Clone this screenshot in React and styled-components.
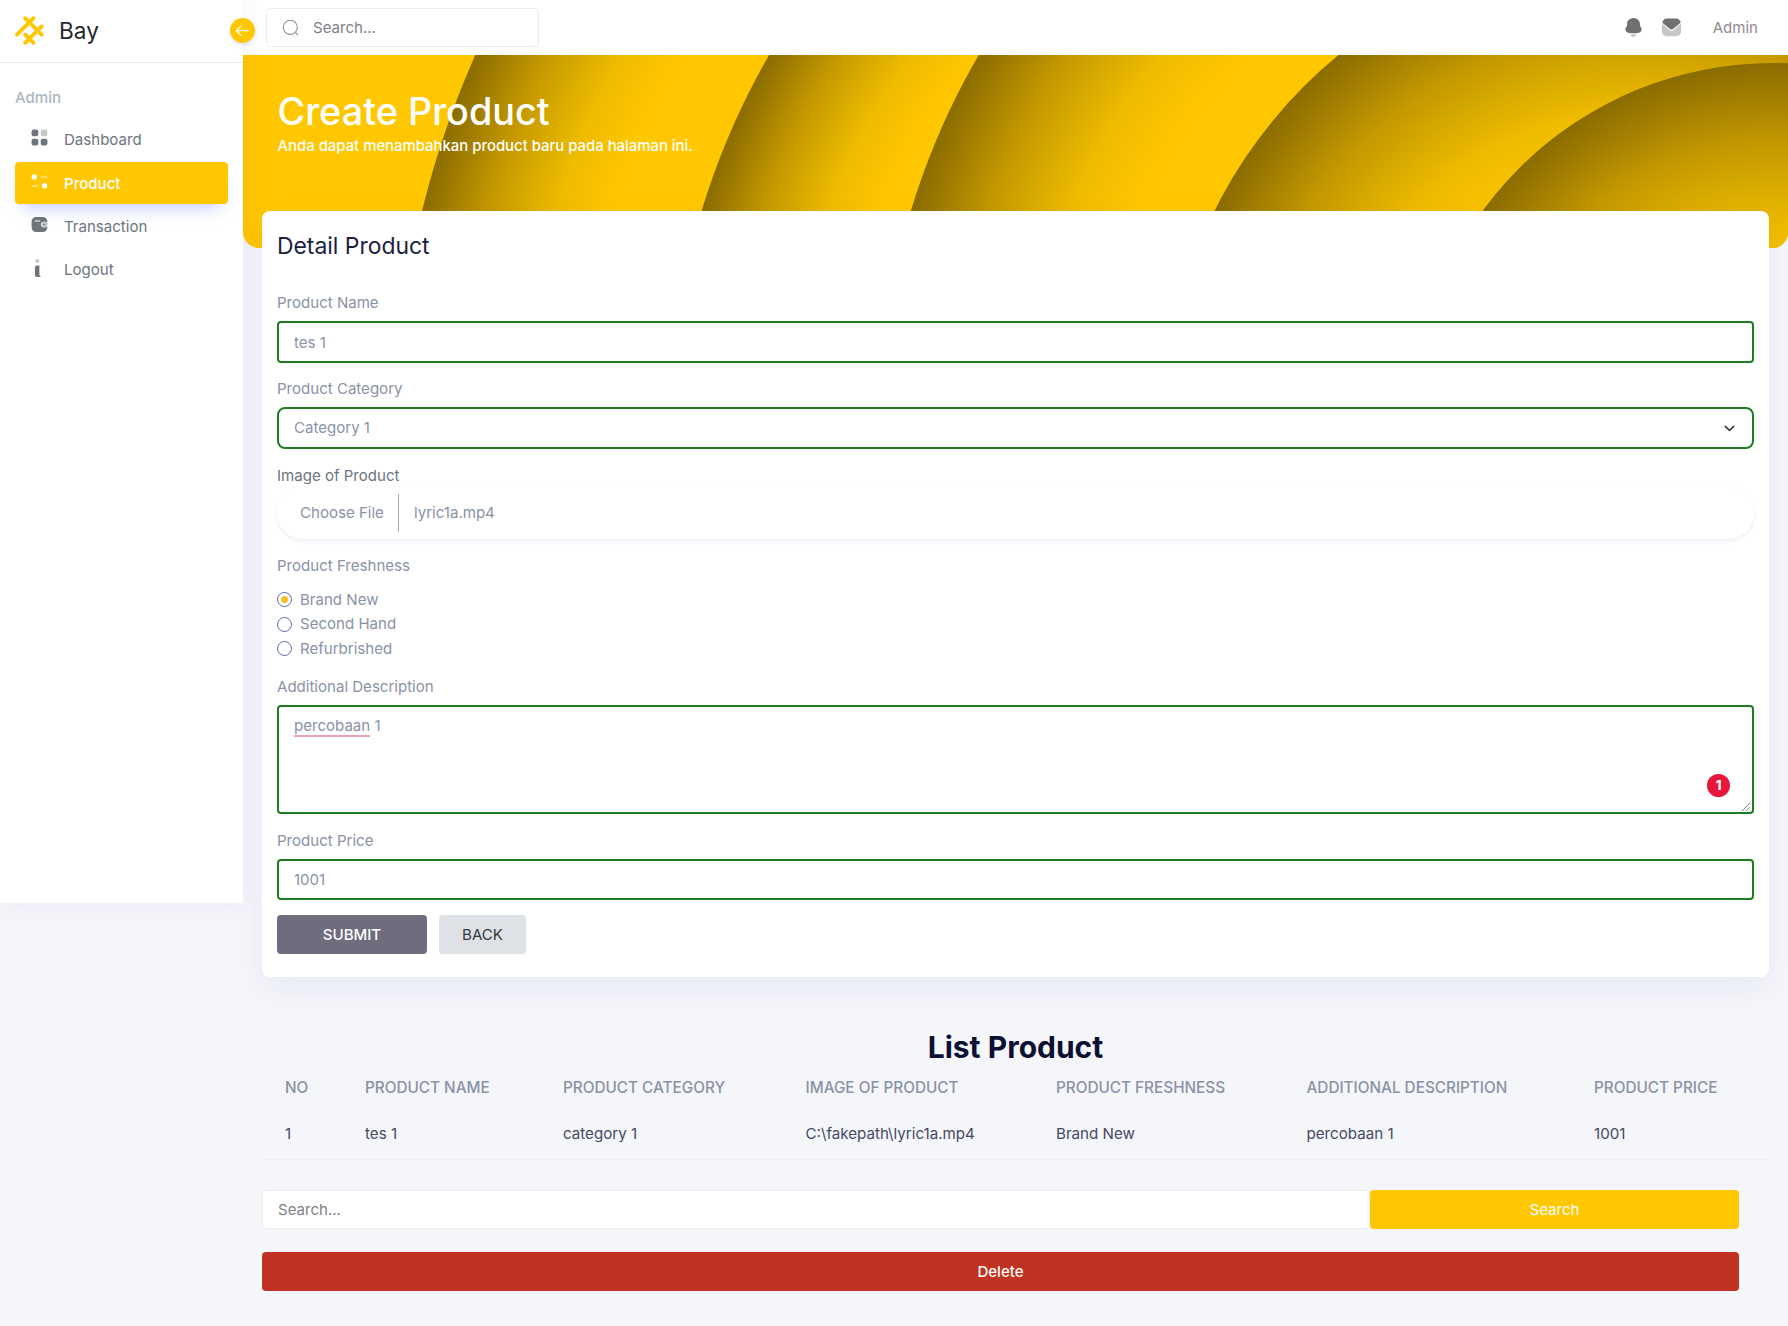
import React from "react";
import styled, { createGlobalStyle, css } from "styled-components";

const YELLOW = "#ffc700";
const MUTED = "#8a92a6";

const GlobalStyle = createGlobalStyle`
  *, *::before, *::after { box-sizing: border-box; }
  body {
    margin: 0;
    background: #f5f6fa;
    font-family: Inter, "Liberation Sans", sans-serif;
    font-size: 15.05px;
    line-height: 22px;
    color: ${MUTED};
  }
  button, input { font: inherit; }
`;

const Page = styled.div`
  display: flex;
  align-items: flex-start;
  width: 1788px;
  height: 1326px;
  overflow: hidden;
`;

/* ---------- Sidebar ---------- */

const Sidebar = styled.aside`
  position: relative;
  z-index: 3;
  flex: 0 0 243px;
  height: 903px;
  background: #fff;
  box-shadow: 0 0 28px rgba(17, 38, 146, 0.06);
`;

const Brand = styled.div`
  display: flex;
  align-items: center;
  gap: 15px;
  height: 63px;
  padding: 0 0 1px 15px;
  border-bottom: 1px solid #e6e7ea;
  color: ${YELLOW};
`;

const BrandName = styled.span`
  font-size: 22.6px;
  line-height: 30px;
  color: #25282e;
`;

const Collapse = styled.button`
  position: absolute;
  top: 18px;
  right: -12px;
  display: grid;
  place-items: center;
  width: 25px;
  height: 25px;
  padding: 0;
  border: 0;
  border-radius: 50%;
  background: ${YELLOW};
  color: #fff;
  box-shadow: 0 2px 4px rgba(17, 38, 146, 0.12);
`;

const Menu = styled.nav`
  display: flex;
  flex-direction: column;
  gap: 1.7px;
  padding: 23px 15px 0;
`;

const MenuTitle = styled.div`
  height: 31.3px;
  padding-top: 1px;
  font-weight: 500;
  color: #adb5bd;
`;

const MenuItem = styled.a`
  display: flex;
  align-items: center;
  height: 41.6px;
  padding: 1px 15px 0;
  border-radius: 4px;
  color: #6c757d;
  ${(p) =>
    p.$active &&
    css`
      background: ${YELLOW};
      color: #fff;
      font-weight: 500;
      box-shadow: 0 10px 18px -8px rgba(58, 87, 232, 0.35);
    `}
`;

const MenuIcon = styled.span`
  display: flex;
  width: 34px;
  padding-bottom: 5px;
`;

/* ---------- Main column ---------- */

const Main = styled.main`
  flex: 1;
  min-width: 0;
`;

const TopBar = styled.header`
  display: flex;
  align-items: center;
  justify-content: space-between;
  height: 54.5px;
  padding: 0 30px 0 23px;
  background: #fff;
`;

const SearchBox = styled.label`
  display: flex;
  align-items: center;
  gap: 14px;
  width: 273px;
  height: 39px;
  padding: 1px 15px 0;
  border: 1px solid #ececee;
  border-radius: 4px;
`;

const SearchInput = styled.input`
  flex: 1;
  min-width: 0;
  padding: 0;
  border: 0;
  outline: 0;
  background: transparent;
  &::placeholder { color: #7d8187; opacity: 1; }
`;

const Actions = styled.div`
  display: flex;
  align-items: center;
  gap: 15px;
  color: #707070;
`;

const UserName = styled.span`
  margin-left: 15px;
  padding-top: 1px;
  color: #8c8c8c;
`;

const Banner = styled.section`
  position: relative;
  height: 193.5px;
  padding: 32.5px 34.5px;
  overflow: hidden;
  border-radius: 0 0 16px 16px;
  background: ${YELLOW};
  color: #fff;
`;

const BannerArt = styled.svg`
  position: absolute;
  inset: 0;
  width: 1545px;
  height: 194px;
`;

const BannerText = styled.div`
  position: relative;
`;

const BannerTitle = styled.h1`
  margin: 0;
  font-size: 37.8px;
  line-height: 48px;
  font-weight: 500;
`;

const BannerNote = styled.p`
  margin: 0;
  font-size: 14.9px;
  font-weight: 500;
`;

const Card = styled.section`
  position: relative;
  margin: -37px 19px 0;
  height: 766px;
  padding: 20px 15px 0;
  border-radius: 8px;
  background: #fff;
  box-shadow: 0 10px 30px rgba(17, 38, 146, 0.06);
`;

const CardTitle = styled.h4`
  margin: 0 0 31px;
  font-size: 22.9px;
  line-height: 30px;
  font-weight: 400;
  color: #1b1e3f;
`;

const Label = styled.label`
  display: block;
  height: 29px;
  color: ${(p) => (p.$dark ? "#6c757d" : MUTED)};
`;

const fieldBox = css`
  width: 100%;
  border: 2px solid #1d7d1f;
  border-radius: 4px;
  background: #fff;
  color: ${MUTED};
  padding: 1px 15px 0;
`;

const Field = styled.input`
  ${fieldBox}
  display: block;
  height: 41.5px;
  margin-bottom: 15.5px;
  outline: 0;
`;

const Select = styled.div`
  ${fieldBox}
  display: flex;
  align-items: center;
  justify-content: space-between;
  height: 41.5px;
  margin-bottom: 16px;
  border-radius: 8px;
`;

const FilePicker = styled.div`
  display: flex;
  align-items: center;
  height: 52px;
  margin: -6.5px 0 15.5px;
  padding-left: 23px;
  border-radius: 26px;
  box-shadow: 0 2px 4px rgba(17, 38, 146, 0.08);
`;

const FileButton = styled.span`
  display: flex;
  align-items: center;
  height: 38px;
  width: 99px;
  margin-right: 15px;
  border-right: 1px solid #a4aab9;
`;

const RadioGroup = styled.div`
  display: flex;
  flex-direction: column;
  gap: 2.5px;
  margin: 5px 0 16px;
`;

const RadioRow = styled.label`
  display: flex;
  align-items: center;
  gap: 8px;
  height: 22px;
`;

const RadioMark = styled.span`
  width: 15px;
  height: 15px;
  border: 1px solid #5a69a8;
  border-radius: 50%;
  background: ${(p) => (p.$checked ? "radial-gradient(circle, #f8bd1c 3px, #fff 4px)" : "#fff")};
`;

const TextArea = styled.div`
  ${fieldBox}
  position: relative;
  height: 109px;
  padding-top: 8px;
  margin-bottom: 16px;
`;

const Misspelt = styled.span`
  border-bottom: 2.5px solid #f0a0b2;
`;

const ErrorCount = styled.span`
  position: absolute;
  right: 22px;
  bottom: 15px;
  width: 23px;
  height: 23px;
  border-radius: 50%;
  background: #e5173b;
  color: #fff;
  font-size: 13px;
  font-weight: 800;
  line-height: 23px;
  text-align: center;
`;

const ResizeGrip = styled.svg`
  position: absolute;
  right: 1px;
  bottom: 0;
`;

const ButtonRow = styled.div`
  display: flex;
  gap: 12px;
  margin-top: -1px;
`;

const Button = styled.button`
  width: ${(p) => p.$width};
  height: 39.5px;
  padding: 1px 0 0;
  border: 0;
  border-radius: 4px;
  background: ${(p) => p.$bg};
  color: ${(p) => p.$color || "#fff"};
  font-weight: ${(p) => p.$weight || 400};
`;

/* ---------- Product list ---------- */

const ListTitle = styled.h2`
  margin: 50px 0 0;
  font-size: 30px;
  line-height: 40px;
  font-weight: 700;
  text-align: center;
  color: #0c1033;
`;

const Table = styled.div`
  margin: 0 19px;
  border-bottom: 1px solid #eeeff3;
`;

const Row = styled.div`
  display: grid;
  grid-template-columns: 80px 198px 242.5px 250.5px 250.5px 287.5px 197px;
  align-items: center;
  height: ${(p) => (p.$head ? "40px" : "52px")};
  padding-top: ${(p) => (p.$head ? "1px" : "2px")};
  color: ${(p) => (p.$head ? MUTED : "#454a63")};
  font-size: ${(p) => (p.$head ? "15.3px" : "15.15px")};
  font-weight: ${(p) => (p.$head ? 500 : 400)};
`;

const Cell = styled.span`
  padding-left: 23px;
  white-space: nowrap;
`;

const ListTools = styled.div`
  display: flex;
  flex-direction: column;
  gap: 22.5px;
  width: 1477px;
  margin: 29.5px 0 0 19px;
`;

const ToolRow = styled.div`
  display: flex;
  align-items: center;
`;

const ListSearch = styled.input`
  flex: 1;
  height: 39.5px;
  padding: 0 15px;
  border: 1px solid #eeeff2;
  border-radius: 4px;
  background: #fff;
  outline: 0;
  &::placeholder { color: #7d8187; opacity: 1; }
`;

/* ---------- Icons ---------- */

const Logo = () => (
  <svg width="29" height="29" viewBox="0 0 30 30" fill="currentColor">
    <rect x="-0.757" y="19.243" width="28" height="4" rx="2" transform="rotate(-45 -0.757 19.243)" />
    <rect x="7.728" y="27.728" width="28" height="4" rx="2" transform="rotate(-45 7.728 27.728)" />
    <rect x="10.537" y="16.395" width="16" height="4" rx="2" transform="rotate(45 10.537 16.395)" />
    <rect x="10.556" y="-0.556" width="28" height="4" rx="2" transform="rotate(45 10.556 -0.556)" />
  </svg>
);

const ArrowLeft = () => (
  <svg width="19" height="19" viewBox="0 0 24 24" fill="none" stroke="currentColor" strokeWidth="1.5" strokeLinecap="round" strokeLinejoin="round">
    <path d="M4.25 12.27H19.25" />
    <path d="M10.3 18.3L4.25 12.27L10.3 6.25" />
  </svg>
);

const GridIcon = () => (
  <svg width="19" height="19" viewBox="0 0 24 24" fill="currentColor">
    <rect x="13.54" y="2" width="8.46" height="8.53" rx="2.56" opacity="0.4" />
    <rect x="2" y="2" width="8.46" height="8.53" rx="2.56" />
    <rect x="2" y="13.47" width="8.46" height="8.53" rx="2.56" />
    <rect x="13.54" y="13.47" width="8.46" height="8.53" rx="2.56" />
  </svg>
);

const FilterIcon = () => (
  <svg width="19" height="19" viewBox="0 0 24 24" fill="currentColor">
    <rect x="2" y="16.2" width="8.8" height="2.8" rx="1.4" opacity="0.4" />
    <rect x="13" y="4.9" width="9" height="2.8" rx="1.4" opacity="0.4" />
    <circle cx="5.45" cy="6.4" r="3.45" />
    <circle cx="18.5" cy="17.5" r="3.45" />
  </svg>
);

const WalletIcon = () => (
  <svg width="19" height="19" viewBox="0 0 24 24" fill="none">
    <path d="M22 15.94C22 18.73 19.76 21.5 16.97 21.5H7.02C4.26 21.5 2 18.73 2 15.94V8.06C2 5.28 4.26 2.5 7.02 2.5H16.97C19.76 2.5 22 5.28 22 8.06V8.4H17.2C15.1 8.4 13.7 10 13.7 11.95C13.7 14 15.2 15.6 17.4 15.6H22Z" fill="currentColor" />
    <path d="M22 8.9V15.1H17.6C15.7 15.1 14.3 13.7 14.3 12C14.3 10.2 15.7 8.9 17.5 8.9Z" fill="currentColor" opacity="0.4" />
    <path d="M17.5 11.1H18.2C18.7 11.1 19.1 11.5 19.1 12C19.1 12.5 18.7 12.9 18.2 12.9H17.5C17 12.9 16.6 12.5 16.6 12C16.6 11.5 17 11.1 17.5 11.1Z" fill="currentColor" />
    <path d="M6.6 7.6H12.4" stroke="#fff" strokeWidth="1.5" strokeLinecap="round" />
  </svg>
);

const InfoIcon = () => (
  <svg width="17" height="20" viewBox="0 0 17 20" fill="currentColor">
    <circle cx="7.3" cy="3" r="2" opacity="0.4" />
    <path d="M5 9.2C5 8.1 5.8 7.4 6.9 7.4H9.4V16.6C9.4 17.4 9.8 17.9 10.6 18.2V19H7C5.7 19 5 18.2 5 17Z" />
  </svg>
);

const SearchIcon = () => (
  <svg width="17" height="17" viewBox="0 0 24 24" fill="none" stroke="#8a8d94" strokeWidth="1.5" strokeLinecap="round">
    <circle cx="11.77" cy="11.77" r="9.9" />
    <path d="M18.9 18.9L22.4 22.4" />
  </svg>
);

const BellIcon = () => (
  <svg width="23" height="23" viewBox="0 0 24 24" fill="currentColor">
    <path d="M19.77 11.65C19.04 10.79 18.71 10.05 18.71 8.79V8.36C18.71 6.73 18.33 5.67 17.51 4.62C16.25 2.99 14.12 2 12.04 2H11.96C9.92 2 7.86 2.94 6.58 4.5C5.71 5.58 5.29 6.69 5.29 8.36V8.79C5.29 10.05 4.98 10.79 4.23 11.65C3.68 12.27 3.5 13.08 3.5 13.95C3.5 14.81 3.79 15.63 4.36 16.3C5.11 17.1 6.17 17.62 7.25 17.7C8.82 17.89 10.39 17.95 12 17.95C13.61 17.95 15.18 17.84 16.75 17.7C17.83 17.62 18.89 17.1 19.64 16.3C20.21 15.63 20.5 14.81 20.5 13.95C20.5 13.08 20.32 12.27 19.77 11.65Z" />
    <path opacity="0.4" d="M14 19.23C13.5 19.12 10.46 19.12 9.96 19.23C9.53 19.33 9.07 19.56 9.07 20.06C9.09 20.54 9.37 20.97 9.76 21.23C10.26 21.63 10.86 21.88 11.48 21.97C12.38 22.1 13.5 21.86 14.2 21.23C14.59 20.97 14.87 20.54 14.89 20.06C14.89 19.56 14.43 19.33 14 19.23Z" />
  </svg>
);

const MailIcon = () => (
  <svg width="23" height="23" viewBox="0 0 24 24" fill="currentColor">
    <path opacity="0.4" d="M22 15.94C22 18.73 19.76 20.99 16.97 21H7.05C4.27 21 2 18.75 2 15.96V9.2C2 8.3 2.5 8.1 3.1 8.7L10 14.8C11.2 15.8 12.8 15.8 14 14.8L20.9 8.7C21.5 8.1 22 8.3 22 9.2Z" />
    <path d="M21.48 6.1C20.52 4 18.9 2.7 16.97 2.7H7.05C5.12 2.7 3.5 4 2.54 6.1C2.32 6.5 2.43 6.97 2.78 7.26L10.4 13.6C11.4 14.4 12.6 14.4 13.6 13.6L21.24 7.26C21.6 6.97 21.7 6.5 21.48 6.1Z" />
  </svg>
);

/* Overlapping discs, each shaded dark along its rim. */
const DISCS = [
  { cx: 1053, cy: 367, r: 899, depth: 185 },
  { cx: 1159.5, cy: 367, r: 732, depth: 170 },
  { cx: 1364.5, cy: 367, r: 728, depth: 215 },
  { cx: 1397, cy: 367, r: 475, depth: 235 },
  { cx: 1530, cy: 367, r: 359, depth: 235 },
];

const BannerPattern = () => (
  <BannerArt viewBox="0 0 1545 194">
    <defs>
      {DISCS.map((d, i) => (
        <radialGradient key={i} id={`disc${i}`} gradientUnits="userSpaceOnUse" cx={d.cx} cy={d.cy} r={d.r}>
          <stop offset={1 - d.depth / d.r} stopColor={YELLOW} />
          <stop offset={1 - (d.depth * 0.7) / d.r} stopColor="#eebb00" />
          <stop offset={1 - (d.depth * 0.35) / d.r} stopColor="#c49900" />
          <stop offset="1" stopColor="#8a6c00" />
        </radialGradient>
      ))}
    </defs>
    {DISCS.map((d, i) => (
      <circle key={i} cx={d.cx} cy={d.cy} r={d.r} fill={`url(#disc${i})`} />
    ))}
  </BannerArt>
);

/* ---------- Data ---------- */

const MENU = [
  { label: "Dashboard", icon: <GridIcon /> },
  { label: "Product", icon: <FilterIcon />, active: true },
  { label: "Transaction", icon: <WalletIcon /> },
  { label: "Logout", icon: <InfoIcon /> },
];

const FRESHNESS = ["Brand New", "Second Hand", "Refurbrished"];

const COLUMNS = [
  "NO",
  "PRODUCT NAME",
  "PRODUCT CATEGORY",
  "IMAGE OF PRODUCT",
  "PRODUCT FRESHNESS",
  "ADDITIONAL DESCRIPTION",
  "PRODUCT PRICE",
];

const PRODUCT = ["1", "tes 1", "category 1", "C:\\fakepath\\lyric1a.mp4", "Brand New", "percobaan 1", "1001"];

export default function App() {
  return (
    <>
      <GlobalStyle />
      <Page>
        <Sidebar>
          <Brand>
            <Logo />
            <BrandName>Bay</BrandName>
          </Brand>
          <Collapse aria-label="Collapse">
            <ArrowLeft />
          </Collapse>
          <Menu>
            <MenuTitle>Admin</MenuTitle>
            {MENU.map((m) => (
              <MenuItem key={m.label} $active={m.active}>
                <MenuIcon>{m.icon}</MenuIcon>
                {m.label}
              </MenuItem>
            ))}
          </Menu>
        </Sidebar>

        <Main>
          <TopBar>
            <SearchBox>
              <SearchIcon />
              <SearchInput placeholder="Search..." />
            </SearchBox>
            <Actions>
              <BellIcon />
              <MailIcon />
              <UserName>Admin</UserName>
            </Actions>
          </TopBar>

          <Banner>
            <BannerPattern />
            <BannerText>
              <BannerTitle>Create Product</BannerTitle>
              <BannerNote>Anda dapat menambahkan product baru pada halaman ini.</BannerNote>
            </BannerText>
          </Banner>

          <Card>
            <CardTitle>Detail Product</CardTitle>
            <Label>Product Name</Label>
            <Field defaultValue="tes 1" />
            <Label>Product Category</Label>
            <Select>
              Category 1
              <svg width="15" height="15" viewBox="0 0 16 16" fill="none" stroke="#343a40" strokeWidth="1.7" strokeLinecap="round" strokeLinejoin="round">
                <path d="M3.5 5.8L8 10L12.5 5.8" />
              </svg>
            </Select>
            <Label $dark>Image of Product</Label>
            <FilePicker>
              <FileButton>Choose File</FileButton>
              lyric1a.mp4
            </FilePicker>
            <Label>Product Freshness</Label>
            <RadioGroup>
              {FRESHNESS.map((f, i) => (
                <RadioRow key={f}>
                  <RadioMark $checked={i === 0} />
                  {f}
                </RadioRow>
              ))}
            </RadioGroup>
            <Label>Additional Description</Label>
            <TextArea>
              <Misspelt>percobaan</Misspelt> 1
              <ErrorCount>1</ErrorCount>
              <ResizeGrip width="10" height="10" viewBox="0 0 10 10" stroke="#777" strokeWidth="0.9">
                <path d="M1 9L9 1M5 9L9 5" />
              </ResizeGrip>
            </TextArea>
            <Label>Product Price</Label>
            <Field defaultValue="1001" />
            <ButtonRow>
              <Button $width="150px" $bg="#6f6c7e" $weight={500}>SUBMIT</Button>
              <Button $width="87px" $bg="#dee2e6" $color="#343a40">BACK</Button>
            </ButtonRow>
          </Card>

          <ListTitle>List Product</ListTitle>
          <Table>
            <Row $head>
              {COLUMNS.map((c) => (
                <Cell key={c}>{c}</Cell>
              ))}
            </Row>
            <Row>
              {PRODUCT.map((c, i) => (
                <Cell key={i}>{c}</Cell>
              ))}
            </Row>
          </Table>
          <ListTools>
            <ToolRow>
              <ListSearch placeholder="Search..." />
              <Button $width="369px" $bg={YELLOW}>Search</Button>
            </ToolRow>
            <Button $width="100%" $bg="#c03221" $weight={500}>Delete</Button>
          </ListTools>
        </Main>
      </Page>
    </>
  );
}
